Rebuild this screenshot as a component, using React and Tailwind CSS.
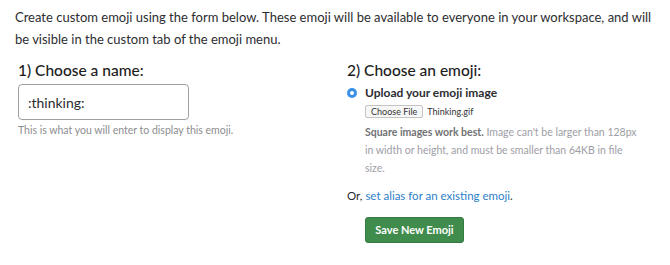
import React from 'react';

const App = () => {
  return (
    <div className="w-[670px] h-[265px] bg-white text-[#2c2d30] overflow-hidden" style={{ fontFamily: 'Lato, "Noto Sans", sans-serif' }}>
      <div className="pl-[15px] pr-[10px] pt-[6px]">
        {/* Intro */}
        <p className="text-[13px] leading-[22px] text-[#2c2d30]">
          Create custom emoji using the form below. These emoji will be available to everyone in your workspace, and will be visible in the custom tab of the emoji menu.
        </p>

        <div className="flex mt-[10px]">
          {/* Left column */}
          <div className="w-[332px] pl-[3px]">
            <h2 className="text-[15.5px] leading-[20px] font-medium text-[#1d1c1d]">1) Choose a name:</h2>
            <div className="mt-[4px] w-[171px] h-[36px] border border-[#a0a0a2] rounded-[4px] flex items-center px-[9px] text-[14px] text-[#2c2d30]">
              :thinking:
            </div>
            <p className="mt-[3px] text-[10.5px] leading-[14px] text-[#8d8d8f]">This is what you will enter to display this emoji.</p>
          </div>

          {/* Right column */}
          <div className="flex-1">
            <h2 className="text-[15.5px] leading-[20px] font-medium text-[#1d1c1d]">2) Choose an emoji:</h2>
            <div className="flex items-center mt-[5px] gap-[8px]">
              <span className="w-[10px] h-[10px] rounded-full bg-[#3a8fe8] flex items-center justify-center">
                <span className="w-[4px] h-[4px] rounded-full bg-white" />
              </span>
              <span className="text-[12px] leading-[16px] font-bold text-[#2c2d30]">Upload your emoji image</span>
            </div>
            <div className="pl-[18px]">
              <div className="flex items-center h-[13px] mt-[4px] gap-[4px]">
                <span className="h-[13px] px-[5px] border border-[#c4c4c4] rounded-[2px] bg-[#f7f7f7] text-[9px] leading-[11px] text-[#333] flex items-center">Choose File</span>
                <span className="text-[9px] leading-[11px] text-[#333]">Thinking.gif</span>
              </div>
              <p className="mt-[5px] text-[10.5px] leading-[18px] text-[#9e9ea6] w-[275px]">
                <span className="font-bold text-[#717274]">Square images work best.</span> Image can't be larger than 128px in width or height, and must be smaller than 64KB in file size.
              </p>
            </div>
            <p className="mt-[11px] text-[11.5px] leading-[16px] text-[#2c2d30]">
              Or, <span className="text-[#2d80c8]">set alias for an existing emoji</span>.
            </p>
            <div className="pl-[18px] mt-[12px]">
              <button className="w-[99px] h-[26px] rounded-[3px] bg-[#3f8c4d] border border-[#367a43] text-white text-[11px] font-bold">Save New Emoji</button>
            </div>
          </div>
        </div>
      </div>
    </div>
  );
};

export default App;
